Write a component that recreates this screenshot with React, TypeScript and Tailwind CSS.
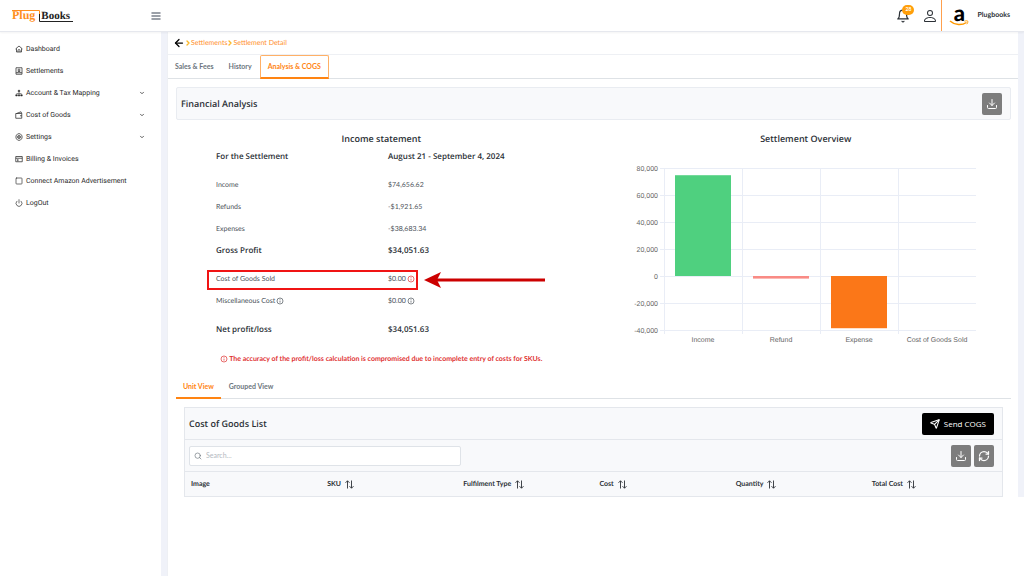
import type { ReactNode } from "react";
import { BsPerson } from "react-icons/bs";
import {
  LuArrowLeft,
  LuBell,
  LuChevronDown,
  LuChevronRight,
  LuDownload,
  LuMenu,
  LuPower,
  LuRefreshCw,
  LuSearch,
  LuSend,
  LuSquare,
} from "react-icons/lu";

const menu = [
  { label: "Dashboard", icon: <HomeIcon /> },
  { label: "Settlements", icon: <SettlementIcon /> },
  { label: "Account & Tax Mapping", icon: <MappingIcon />, sub: true },
  { label: "Cost of Goods", icon: <GoodsIcon />, sub: true },
  { label: "Settings", icon: <SettingsIcon />, sub: true },
  { label: "Billing & Invoices", icon: <BillingIcon /> },
  { label: "Connect Amazon Advertisement", icon: <LuSquare className="size-2" /> },
  { label: "LogOut", icon: <LuPower className="size-2" /> },
];

const columns = ["Image", "SKU", "Fulfilment Type", "Cost", "Quantity", "Total Cost"];

const bars = [
  { label: "Income", value: 74656.62, color: "#4fd07f" },
  { label: "Refund", value: -1921.65, color: "#f98b85" },
  { label: "Expense", value: -38683.34, color: "#fb7718" },
  { label: "Cost of Goods Sold", value: 0, color: "#4fd07f" },
];

const ticks = [80000, 60000, 40000, 20000, 0, -20000, -40000];

export default function App() {
  return (
    <div className="flex min-h-screen flex-col bg-white font-['Lato','Open_Sans',sans-serif] text-[#2b3036] [text-rendering:geometricPrecision]">
      <Header />
      <div className="flex flex-1">
        <Sidebar />
        <main className="min-w-0 flex-1 border-l border-[#eef0f4]">
          <div className="border-r-6 border-[#f0f2f9]">
            <nav aria-label="Breadcrumb" className="flex h-[23px] items-center border-b border-[#eef0f4] pl-[5px] text-[7px] text-[#ff8f2b]">
              <a href="#back" aria-label="Back" className="text-black">
                <LuArrowLeft className="size-3 stroke-[2.5]" />
              </a>
              <LuChevronRight className="-mx-px size-2 stroke-4 text-[#fdb827]" />
              <a href="#settlements">Settlements</a>
              <LuChevronRight className="-mx-px size-2 stroke-4 text-[#fdb827]" />
              <a href="#detail">Settlement Detail</a>
            </nav>
            <div className="flex h-6 border-b border-[#dee2e6] text-[7px] font-bold text-[#6c757d]">
              <button className="px-[7px]">Sales &amp; Fees</button>
              <button className="px-2">History</button>
              <button className="-mb-px rounded-t-xs border border-b-2 border-[#ffb066] border-b-[#ff8412] px-[7px] text-[#ff8412]">
                Analysis &amp; COGS
              </button>
            </div>

            <div className="pt-2 pr-[7px] pl-2">
              <div className="flex h-[33px] items-center justify-between rounded-xs border border-[#e9ecf1] bg-[#f8f9fb] pr-2 pl-1">
                <h2 className="font-['Open_Sans',sans-serif] text-[9px] font-semibold">Financial Analysis</h2>
                <IconButton label="Download analysis">
                  <LuDownload className="size-3" />
                </IconButton>
              </div>

              <div className="grid grid-cols-2 gap-x-3.5 pt-3">
                <IncomeStatement />
                <section>
                  <SectionTitle>Settlement Overview</SectionTitle>
                  <OverviewChart />
                </section>
              </div>

              <div className="mt-[5px] flex h-6 border-b border-[#dee2e6] text-[7px] font-bold text-[#6c757d]">
                <button className="-mb-px border-b-2 border-[#ff8412] px-[7px] text-[#ff8412]">Unit View</button>
                <button className="px-2">Grouped View</button>
              </div>

              <CostOfGoods />
            </div>
          </div>
        </main>
      </div>
    </div>
  );
}

function Header() {
  return (
    <header className="relative flex h-8 items-center border-b border-[#e6e8ee] pr-3.5 pl-3 shadow-xs">
      <Logo />
      <button aria-label="Toggle menu" className="ml-[74px] text-[#7b818c]">
        <LuMenu className="size-3 stroke-3" />
      </button>
      <button aria-label="Notifications" className="relative ml-auto">
        <LuBell className="size-3.5" />
        <span className="absolute -top-1 left-1.5 flex h-2.5 w-3 items-center justify-center rounded-full bg-[#ff9f0a] text-[5px] font-bold text-white">
          28
        </span>
      </button>
      <button aria-label="Account" className="ml-3">
        <BsPerson className="size-4" />
      </button>
      <div className="ml-[3px] flex h-full items-center gap-2 border-l border-[#ffa04d] pl-[7px]">
        <AmazonLogo />
        <span className="text-[7px] font-bold">Plugbooks</span>
      </div>
    </header>
  );
}

function Sidebar() {
  return (
    <aside className="w-[167px] shrink-0 border-r-6 border-[#f0f2f9] pt-1.5">
      <nav className="flex flex-col font-['Roboto',sans-serif] text-[7px] text-[#2b2b2b]">
        {menu.map((item) => (
          <a key={item.label} href="#menu" className="flex h-[22px] items-center pr-4 pl-[15px]">
            <span className="flex w-[11px] shrink-0">{item.icon}</span>
            <span className="whitespace-nowrap">{item.label}</span>
            {item.sub && <LuChevronDown className="ml-auto size-1.5 stroke-3" />}
          </a>
        ))}
      </nav>
    </aside>
  );
}

function SectionTitle({ children }: { children: ReactNode }) {
  return (
    <h3 className="h-3.5 text-center font-['Open_Sans',sans-serif] text-[9px] leading-3.5 font-semibold">{children}</h3>
  );
}

function IncomeStatement() {
  return (
    <section>
      <SectionTitle>Income statement</SectionTitle>
      <Row strong label="For the Settlement" value="August 21 - September 4, 2024" />
      <div className="mt-1.5">
        <Row label="Income" value="$74,656.62" />
        <Row label="Refunds" value="-$1,921.65" />
        <Row label="Expenses" value="-$38,683.34" />
        <Row strong label="Gross Profit" value="$34,051.63" />
      </div>
      <div className="mt-1.5">
        <div className="relative">
          <Row label="Cost of Goods Sold" value={<>$0.00 <span className="text-[#e03131]"><InfoIcon /></span></>} />
          {/* Callout */}
          <div className="absolute top-0.5 left-[31px] h-5 w-[211px] border-2 border-[#f01414]" />
          <svg className="absolute top-1 left-[248px] h-4 w-[121px]" viewBox="0 0 121 16">
            <path d="M0 8 17 0 13 8 17 16Z" fill="#cc0000" />
            <path d="M12 8H121" stroke="#cc0000" strokeWidth="3" />
          </svg>
        </div>
        <Row label={<>Miscellaneous Cost <InfoIcon /></>} value={<>$0.00 <InfoIcon /></>} />
      </div>
      <div className="mt-[7px]">
        <Row strong label="Net profit/loss" value="$34,051.63" />
      </div>
      <p className="mt-[7px] flex h-[22px] items-center justify-center gap-px text-[7px] font-bold text-[#e03131]">
        <InfoIcon />
        The accuracy of the profit/loss calculation is compromised due to incomplete entry of costs for SKUs.
      </p>
    </section>
  );
}

function Row({ label, value, strong }: { label: ReactNode; value: ReactNode; strong?: boolean }) {
  return (
    <div
      className={`grid h-[22px] grid-cols-[172px_1fr] items-center pl-10 ${
        strong ? "font-['Open_Sans',sans-serif] text-[8px] font-semibold" : "text-[7px] text-[#4d545b]"
      }`}
    >
      <span className="flex items-center gap-px">{label}</span>
      <span className="flex items-center gap-px">{value}</span>
    </div>
  );
}

function OverviewChart() {
  const y = (v: number) => 130 - (v / 20000) * 27;
  return (
    <svg
      viewBox="1 0 346 204"
      className="mx-auto w-full max-w-[346px] font-['Liberation_Sans',sans-serif] text-[7px]"
      role="img"
      aria-label="Settlement overview chart"
    >
      {ticks.map((t) => (
        <g key={t}>
          <line x1="28" x2="344" y1={y(t) + 0.5} y2={y(t) + 0.5} stroke="#e9edf6" />
          <text x="26" y={y(t) + 3} textAnchor="end" fill="#666">
            {t.toLocaleString("en-US")}
          </text>
        </g>
      ))}
      {bars.map((b, i) => (
        <g key={b.label}>
          <line x1={32.5 + i * 78} x2={32.5 + i * 78} y1="22" y2="188" stroke="#e9edf6" />
          <rect x={43 + i * 78} y={Math.min(y(b.value), y(0))} width="56" height={Math.abs(y(b.value) - y(0))} fill={b.color} />
          <text x={71 + i * 78} y="196" textAnchor="middle" fill="#666">
            {b.label}
          </text>
        </g>
      ))}
    </svg>
  );
}

function CostOfGoods() {
  return (
    <section className="mx-2 mt-2 border border-[#e4e7ec] bg-[#f8f9fb]">
      <div className="flex h-8 items-center justify-between border-b border-[#e4e7ec] pr-2 pl-1">
        <h2 className="font-['Open_Sans',sans-serif] text-[9px] font-semibold">Cost of Goods List</h2>
        <button className="flex h-[22px] items-center gap-1 rounded-xs bg-black px-2 font-['Open_Sans',sans-serif] text-[8px] text-white">
          <LuSend className="size-2.5 stroke-[2.5]" />
          Send COGS
        </button>
      </div>
      <div className="flex h-8 items-center justify-between border-b border-[#e4e7ec] pr-2 pl-1">
        <label className="flex h-5 w-[272px] items-center gap-1 rounded-xs border border-[#dfe3e8] bg-white pl-1">
          <LuSearch className="size-2 text-[#6c757d]" />
          <input
            type="text"
            aria-label="Search"
            placeholder="Search..."
            className="min-w-0 flex-1 text-[7px] outline-none placeholder:text-[#b4b9bf]"
          />
        </label>
        <div className="flex gap-[3px]">
          <IconButton label="Download list">
            <LuDownload className="size-3" />
          </IconButton>
          <IconButton label="Refresh list">
            <LuRefreshCw className="size-3 stroke-[2.5]" />
          </IconButton>
        </div>
      </div>
      <table className="w-full table-fixed text-left text-[7px]">
        <thead>
          <tr className="h-6">
            {columns.map((c, i) => (
              <th key={c} className="pl-1.5 font-bold">
                <span className="flex items-center gap-1">
                  {c}
                  {i > 0 && <SortIcon />}
                </span>
              </th>
            ))}
          </tr>
        </thead>
      </table>
    </section>
  );
}

function IconButton({ label, children }: { label: string; children: ReactNode }) {
  return (
    <button aria-label={label} className="flex h-[22px] w-5 items-center justify-center rounded-xs bg-[#7d7d7d] text-white">
      {children}
    </button>
  );
}

function InfoIcon() {
  return (
    <svg viewBox="0 0 8 8" className="size-2" fill="none" stroke="currentColor">
      <circle cx="4" cy="4" r="3" strokeWidth=".7" />
      <path d="M4 3.6V5.6M4 2.200V2.900" strokeWidth=".7" />
    </svg>
  );
}

function SortIcon() {
  return (
    <svg viewBox="0 0 9 9" className="size-[9px]" fill="none" stroke="currentColor">
      <path d="M2.5 8.5V.8M.5 2.8 2.5.8 4.5 2.8M6.5.5V8.2M4.5 6.2 6.5 8.2 8.5 6.2" strokeWidth=".9" />
    </svg>
  );
}

function Logo() {
  return (
    <a href="#home" aria-label="Plug Books" className="relative flex h-3.5 w-16 font-['Liberation_Serif',serif] font-bold">
      <span className="text-[12px] leading-3 text-[#ff8f1f]">Plug</span>
      <span className="pl-1.5 text-[11px] leading-3.5 text-[#222]">Books</span>
      <svg viewBox="0 0 64 14" className="absolute inset-0 h-3.5 w-16" fill="none">
        <path d="M0 1.5H27.5V7" stroke="#ff8f1f" />
        <path d="M27.5 5V12.5H61" stroke="#222" />
      </svg>
    </a>
  );
}

function AmazonLogo() {
  return (
    <span className="relative flex h-6 w-5 items-start justify-center">
      <span className="-mt-[3px] text-[22px] leading-6 font-black text-black">a</span>
      <svg viewBox="0 0 20 6" className="absolute bottom-0.5 left-0 h-1.5 w-5" fill="none" stroke="#ff9900">
        <path d="M1 1C6 5.5 13 5.5 17.5 2.5" strokeWidth="1.5" />
        <path d="M15.5 1.2C17 .7 18.5 .7 18.8 1.2S18.6 3.2 17.8 4.2" />
      </svg>
    </span>
  );
}

function MenuSvg({ children }: { children: ReactNode }) {
  return (
    <svg viewBox="0 0 16 16" className="size-2" fill="none" stroke="currentColor" strokeWidth="1.5">
      {children}
    </svg>
  );
}

function HomeIcon() {
  return (
    <MenuSvg>
      <path d="M1 8 8 2l7 6M3 7v7h10V7M6 14v-3a2 2 0 0 1 4 0v3" />
    </MenuSvg>
  );
}

function SettlementIcon() {
  return (
    <MenuSvg>
      <path d="M2 1.5h12v13H2zM2 11.5h12M5.5 11a2.5 2.5 0 0 1 5 0" />
      <circle cx="8" cy="6" r="2" />
    </MenuSvg>
  );
}

function MappingIcon() {
  return (
    <MenuSvg>
      <path d="M8 6v3M3.5 11V9h9v2M8 9v2" strokeWidth="1" />
      <path
        d="M6.5 2.5h3v3h-3zM1.5 11.5h3V14h-3zM6.5 11.5h3V14h-3zM11.5 11.5h3V14h-3z"
        fill="currentColor"
        strokeWidth="1"
      />
    </MenuSvg>
  );
}

function GoodsIcon() {
  return (
    <MenuSvg>
      <path d="M1.5 5h12v9.5h-12zM3 5l9-3.5L13.5 5M10 9.5h3.5" />
    </MenuSvg>
  );
}

function SettingsIcon() {
  return (
    <MenuSvg>
      <path d="M5 2.5 8 1l3 1.5L14 5v6l-3 2.5L8 15l-3-1.5L2 11V5z" />
      <circle cx="8" cy="8" r="3" />
      <circle cx="8" cy="8" r="1" />
    </MenuSvg>
  );
}

function BillingIcon() {
  return (
    <MenuSvg>
      <path d="M1.5 3h13v10.5h-13zM1.5 6.5h13M4 9.5h3M4 11.5h3" />
    </MenuSvg>
  );
}
